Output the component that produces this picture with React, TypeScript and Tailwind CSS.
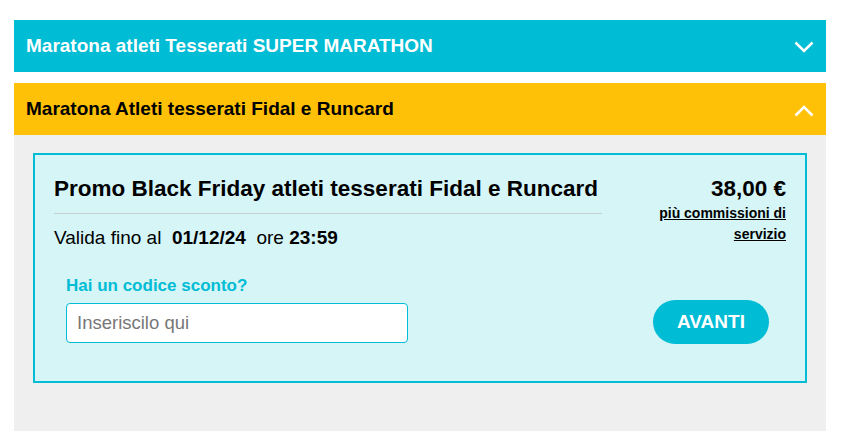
import { useState } from "react";

function Chevron({ up }: { up?: boolean }) {
  return (
    <svg width="20" height="12" viewBox="0 0 20 12" fill="none" className={up ? "mt-[3px] shrink-0" : "mt-[2px] shrink-0"}>
      <path
        d={up ? "M1.5 10.5 L10 2 L18.5 10.5" : "M1.5 1.5 L10 10 L18.5 1.5"}
        stroke="white"
        strokeWidth="2.5"
      />
    </svg>
  );
}

export default function App() {
  const [code, setCode] = useState("");

  return (
    <div className="bg-white pl-[14px] pr-[30px] pt-5 pb-2 font-['Liberation_Sans',Arial,sans-serif]">
      <div className="flex h-[52px] items-center justify-between bg-[#00bcd4] pl-3 pr-3">
        <span className="text-[19px] font-bold text-white">Maratona atleti Tesserati SUPER MARATHON</span>
        <Chevron />
      </div>

      <div className="mt-[11px] flex h-[52px] items-center justify-between bg-[#ffc107] pl-3 pr-3">
        <span className="text-[19px] font-bold text-black">Maratona Atleti tesserati Fidal e Runcard</span>
        <Chevron up />
      </div>

      <div className="bg-[#efefef] px-[19px] pt-[18px] pb-[48px]">
        <div className="border-2 border-[#00bcd4] bg-[#d5f5f7] px-[19px] pt-[20px] pb-[38px]">
          <div className="flex justify-between">
            <div className="w-[548px]">
              <h2 className="text-[22.5px] font-bold leading-[28px] text-black">
                Promo Black Friday atleti tesserati Fidal e Runcard
              </h2>
              <div className="mt-[10px] border-t border-[#c4cfd1]" />
              <p className="mt-[13px] text-[19px] leading-[22px] text-black">
                Valida fino al&nbsp; <b>01/12/24</b>&nbsp; ore <b>23:59</b>
              </p>
            </div>
            <div className="text-right">
              <div className="text-[22.5px] font-bold leading-[28px] text-black">38,00 €</div>
              <a href="#" className="block text-[14px] font-bold leading-[21px] text-black underline">
                più commissioni di
                <br />
                servizio
              </a>
            </div>
          </div>

          <div className="mt-[27px] flex items-end justify-between pl-3 pr-[17px]">
            <div>
              <div className="text-[17px] font-bold leading-[20px] text-[#00bcd4]">Hai un codice sconto?</div>
              <input
                value={code}
                onChange={(event) => setCode(event.target.value)}
                placeholder="Inseriscilo qui"
                className="mt-[7px] h-[40px] w-[342px] rounded-[4px] border border-[#00bcd4] bg-white px-[10px] text-[18.5px] text-black outline-none placeholder:text-[#777]"
              />
            </div>
            <button
              type="button"
              className="mb-[-1px] h-[44px] w-[116px] rounded-full bg-[#00bcd4] text-[19px] font-bold text-white"
            >
              AVANTI
            </button>
          </div>
        </div>
      </div>
    </div>
  );
}
